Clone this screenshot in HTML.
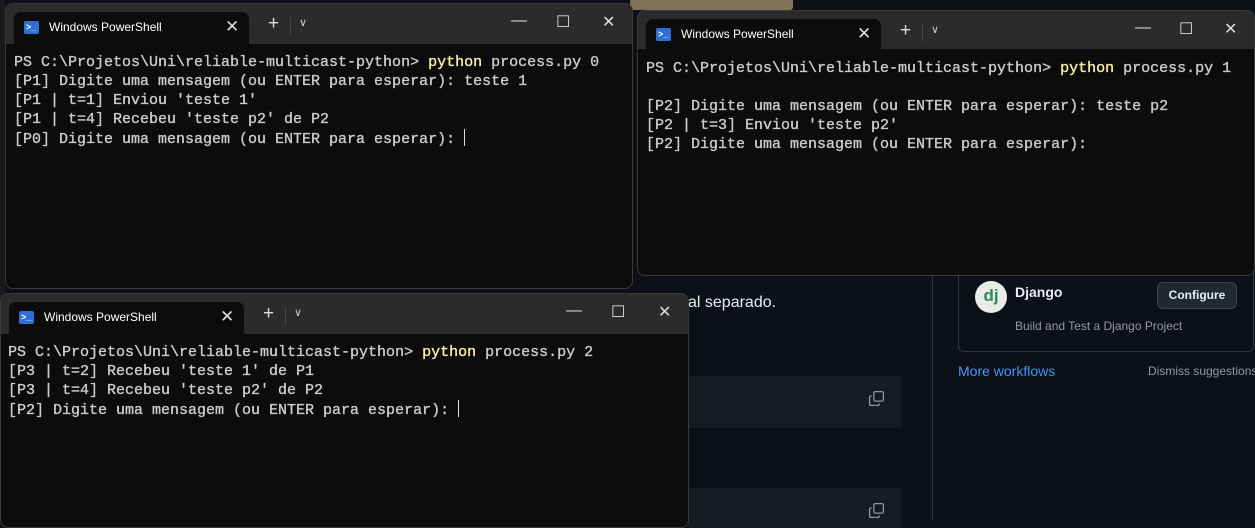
<!DOCTYPE html><html><head><style>
*{margin:0;padding:0;box-sizing:border-box}
body{width:1255px;height:521px;background:#0d1117;position:relative;overflow:hidden;font-family:"Liberation Sans",sans-serif}
.win{position:absolute;background:#0c0c0c;border:1px solid #3a3a3a;border-radius:8px;overflow:hidden}
.tb{position:absolute;left:0;right:0;top:0;height:40px;background:#2b2b2b}
.tab{position:absolute;left:8px;top:8px;width:235px;height:32px;background:#0c0c0c;border-radius:7px 7px 0 0}
.tab .ic{position:absolute;left:10px;top:9px;width:15px;height:13px;background:#2f6fd8;border-radius:2px;color:#fff;font-size:9px;line-height:13px;padding-left:2px;font-weight:bold}
.tab .t{position:absolute;left:35px;top:8px;font-size:12px;color:#fff}
.tab .x{position:absolute;left:211px;top:5px;font-size:17px;color:#ddd}
.plus{position:absolute;left:262px;top:9px;color:#ddd;font-size:19px}
.sep{position:absolute;left:284px;top:13px;width:1px;height:18px;background:#444}
.chev{position:absolute;left:293px;top:12px;color:#ccc;font-size:11px}
.ctl{position:absolute;top:8px;color:#ddd;font-size:16px}
.term{position:absolute;left:8px;top:48px;font-family:"Liberation Mono",monospace;font-size:15px;line-height:19px;color:#cccccc;white-space:pre;-webkit-text-stroke:0.35px #cccccc}
.y{color:#f9f1a5;-webkit-text-stroke:0.35px #f9f1a5}
.cur{display:inline-block;width:1px;height:17px;background:#ddd;vertical-align:-3px}
</style></head><body>
<div style="position:absolute;left:630px;top:0;width:163px;height:10px;background:#7f7258;border-radius:0 0 3px 3px"></div>
<div style="position:absolute;left:0;top:0;width:5px;height:300px;background:#1a1a1a"></div>
<div style="position:absolute;left:932px;top:275px;width:1px;height:246px;background:#30363d"></div>
<div style="position:absolute;left:688px;top:294px;color:#e6edf3;font-size:16px">al separado.</div>
<div style="position:absolute;left:688px;top:376px;width:213px;height:52px;background:#161b22"></div>
<div style="position:absolute;left:688px;top:488px;width:213px;height:40px;background:#161b22"></div>
<svg style="position:absolute;left:868px;top:390px" width="17" height="17" viewBox="0 0 16 16" fill="none" stroke="#9198a1" stroke-width="1.2"><rect x="5.5" y="1.5" width="9" height="9" rx="1.5"/><path d="M3.5 5.5h-1a1 1 0 0 0-1 1v7a1 1 0 0 0 1 1h7a1 1 0 0 0 1-1v-1"/></svg>
<svg style="position:absolute;left:868px;top:502px" width="17" height="17" viewBox="0 0 16 16" fill="none" stroke="#9198a1" stroke-width="1.2"><rect x="5.5" y="1.5" width="9" height="9" rx="1.5"/><path d="M3.5 5.5h-1a1 1 0 0 0-1 1v7a1 1 0 0 0 1 1h7a1 1 0 0 0 1-1v-1"/></svg>
<div style="position:absolute;left:958px;top:260px;width:296px;height:92px;border:1px solid #30363d;border-radius:6px"></div>
<div style="position:absolute;left:975px;top:281px;width:32px;height:32px;border-radius:50%;background:#e8ebe8;color:#2e8b57;font-weight:bold;font-size:17px;text-align:center;line-height:29px">dj</div>
<div style="position:absolute;left:1015px;top:284px;color:#e6edf3;font-weight:bold;font-size:14px">Django</div>
<div style="position:absolute;left:1157px;top:282px;width:80px;height:27px;background:#212830;border:1px solid #3d444d;border-radius:6px;color:#e6edf3;font-weight:bold;font-size:12px;text-align:center;line-height:25px">Configure</div>
<div style="position:absolute;left:1015px;top:319px;color:#9198a1;font-size:12px">Build and Test a Django Project</div>
<div style="position:absolute;left:958px;top:363px;color:#4493f8;font-size:14px">More workflows</div>
<div style="position:absolute;left:1148px;top:364px;color:#9198a1;font-size:12px;white-space:nowrap">Dismiss suggestions</div>

<div class="win" style="left:5px;top:3px;width:628px;height:286px">
<div class="tb"></div>
<div class="tab"><div class="ic">&gt;_</div><div class="t">Windows PowerShell</div><div class="x">✕</div></div>
<div class="plus">+</div><div class="sep"></div><div class="chev">∨</div>
<div class="ctl" style="left:505px">—</div><div class="ctl" style="left:550px">☐</div><div class="ctl" style="left:596px">✕</div>
<div class="term" style="top:49px">PS C:\Projetos\Uni\reliable-multicast-python> <span class="y">python</span> process.py 0
[P1] Digite uma mensagem (ou ENTER para esperar): teste 1
[P1 | t=1] Enviou 'teste 1'
[P1 | t=4] Recebeu 'teste p2' de P2
[P0] Digite uma mensagem (ou ENTER para esperar): <span class="cur"></span></div>
</div>

<div class="win" style="left:637px;top:10px;width:618px;height:266px">
<div class="tb" style="height:38px"></div>
<div class="tab"><div class="ic">&gt;_</div><div class="t">Windows PowerShell</div><div class="x">✕</div></div>
<div class="plus">+</div><div class="sep"></div><div class="chev">∨</div>
<div class="ctl" style="left:497px">—</div><div class="ctl" style="left:541px">☐</div><div class="ctl" style="left:586px">✕</div>
<div class="term" style="top:48px">PS C:\Projetos\Uni\reliable-multicast-python> <span class="y">python</span> process.py 1

[P2] Digite uma mensagem (ou ENTER para esperar): teste p2
[P2 | t=3] Enviou 'teste p2'
[P2] Digite uma mensagem (ou ENTER para esperar):</div>
</div>

<div class="win" style="left:0;top:293px;width:689px;height:235px">
<div class="tb"></div>
<div class="tab"><div class="ic">&gt;_</div><div class="t">Windows PowerShell</div><div class="x">✕</div></div>
<div class="plus">+</div><div class="sep"></div><div class="chev">∨</div>
<div class="ctl" style="left:565px">—</div><div class="ctl" style="left:610px">☐</div><div class="ctl" style="left:657px">✕</div>
<div class="term" style="top:49px;left:7px">PS C:\Projetos\Uni\reliable-multicast-python> <span class="y">python</span> process.py 2
[P3 | t=2] Recebeu 'teste 1' de P1
[P3 | t=4] Recebeu 'teste p2' de P2
[P2] Digite uma mensagem (ou ENTER para esperar): <span class="cur"></span></div>
</div>
</body></html>
